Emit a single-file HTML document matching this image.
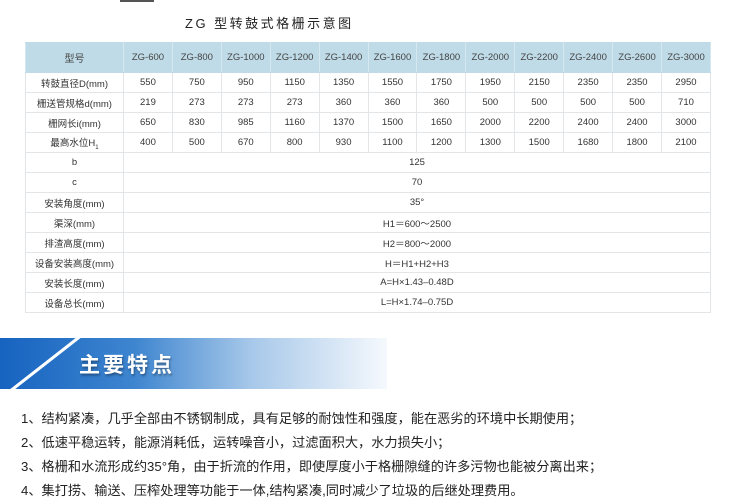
<!DOCTYPE html>
<html><head><meta charset="utf-8"><style>
body{margin:0;width:750px;height:503px;background:#fff;position:relative;overflow:hidden;font-family:"Liberation Sans","Noto Sans CJK SC",sans-serif;}
.title{position:absolute;left:185px;top:13px;font-size:13px;letter-spacing:2.5px;color:#222;}
table{position:absolute;left:25px;top:42px;border-collapse:collapse;table-layout:fixed;width:686px;}
td{border:1px solid #e2e6e8;text-align:center;font-size:9.5px;color:#333;height:19px;padding:0;}
tr.h td{background:#bfdbe7;height:29px;border-color:#bfdbe7 #d6e8ef;color:#444;}
tr.h td:first-child{font-size:10px;}
td:first-child{width:97px;}
.banner{position:absolute;left:0;top:338px;width:387px;height:51px;background:linear-gradient(90deg,#1663c0 0%,#3f86d0 35%,#a7c8e9 65%,#f5f9fd 100%);overflow:hidden;}
.slash{position:absolute;top:-5px;width:5px;height:70px;background:#fff;transform:skewX(-52deg);transform-origin:top left;left:82px;}
.bt{position:absolute;left:79px;top:11px;font-size:21px;font-weight:bold;color:#fff;letter-spacing:3px;text-shadow:1px 2px 2px rgba(0,0,0,.35);}
.list{position:absolute;left:21px;top:407px;font-size:13.2px;line-height:24px;color:#222;}
</style></head><body>
<div style="position:absolute;left:120px;top:0;width:34px;height:2px;background:#555"></div>
<div class="title">ZG 型转鼓式格栅示意图</div>
<table>
<tr class="h"><td>型号</td><td>ZG-600</td><td>ZG-800</td><td>ZG-1000</td><td>ZG-1200</td><td>ZG-1400</td><td>ZG-1600</td><td>ZG-1800</td><td>ZG-2000</td><td>ZG-2200</td><td>ZG-2400</td><td>ZG-2600</td><td>ZG-3000</td></tr>
<tr><td>转鼓直径D(mm)</td><td>550</td><td>750</td><td>950</td><td>1150</td><td>1350</td><td>1550</td><td>1750</td><td>1950</td><td>2150</td><td>2350</td><td>2350</td><td>2950</td></tr>
<tr><td>栅送管规格d(mm)</td><td>219</td><td>273</td><td>273</td><td>273</td><td>360</td><td>360</td><td>360</td><td>500</td><td>500</td><td>500</td><td>500</td><td>710</td></tr>
<tr><td>栅网长i(mm)</td><td>650</td><td>830</td><td>985</td><td>1160</td><td>1370</td><td>1500</td><td>1650</td><td>2000</td><td>2200</td><td>2400</td><td>2400</td><td>3000</td></tr>
<tr><td>最高水位H<sub style="font-size:6px">1</sub></td><td>400</td><td>500</td><td>670</td><td>800</td><td>930</td><td>1100</td><td>1200</td><td>1300</td><td>1500</td><td>1680</td><td>1800</td><td>2100</td></tr>
<tr><td>b</td><td colspan="12">125</td></tr>
<tr><td>c</td><td colspan="12">70</td></tr>
<tr><td>安装角度(mm)</td><td colspan="12">35°</td></tr>
<tr><td>渠深(mm)</td><td colspan="12">H1＝600～2500</td></tr>
<tr><td>排渣高度(mm)</td><td colspan="12">H2＝800～2000</td></tr>
<tr><td>设备安装高度(mm)</td><td colspan="12">H＝H1+H2+H3</td></tr>
<tr><td>安装长度(mm)</td><td colspan="12">A=H×1.43–0.48D</td></tr>
<tr><td>设备总长(mm)</td><td colspan="12">L=H×1.74–0.75D</td></tr>
</table>
<div class="banner"><div class="slash"></div><div class="bt">主要特点</div></div>
<div class="list">
1、结构紧凑，几乎全部由不锈钢制成，具有足够的耐蚀性和强度，能在恶劣的环境中长期使用；<br>
2、低速平稳运转，能源消耗低，运转噪音小，过滤面积大，水力损失小；<br>
3、格栅和水流形成约35°角，由于折流的作用，即使厚度小于格栅隙缝的许多污物也能被分离出来；<br>
4、集打捞、输送、压榨处理等功能于一体,结构紧凑,同时减少了垃圾的后继处理费用。
</div>
</body></html>
